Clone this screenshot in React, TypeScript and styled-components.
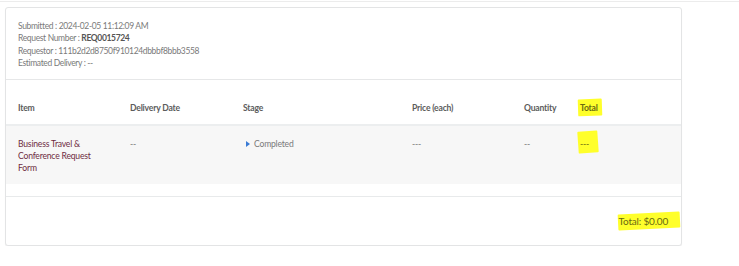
import React from "react";
import styled, { createGlobalStyle } from "styled-components";

const GlobalStyle = createGlobalStyle`
  html, body {
    margin: 0;
    padding: 0;
    background: #fff;
  }
  body {
    font-family: Lato, "Open Sans", sans-serif;
    color: #777;
  }
`;

const TopRule = styled.div`
  height: 1px;
  margin-top: 1px;
  background: #ececec;
`;

const Card = styled.div`
  width: 675px;
  margin: 5px 0 0 5px;
  border: 1px solid #e3e4e5;
  border-radius: 3px;
  box-shadow: 0 1px 1px rgba(0, 0, 0, 0.06);
  background: #fff;
`;

const Summary = styled.div`
  padding: 12px 12px 9px;
  border-bottom: 1px solid #e6e7e8;
  font-size: 8.5px;
  letter-spacing: -0.35px;
  line-height: 12.4px;
  color: #7a7a7a;
`;

const SummaryLine = styled.div`
  white-space: nowrap;
`;

const Strong = styled.b`
  color: #555;
  font-weight: 700;
`;

const columns = "112px 113px 169px 112px 56px 1fr";

const HeadRow = styled.div`
  display: grid;
  grid-template-columns: ${columns};
  padding: 22px 12px 10px;
  border-bottom: 2px solid #eceeef;
  font-size: 8.6px;
  letter-spacing: -0.2px;
  line-height: 12px;
  font-weight: 700;
  color: #5c5c5c;
`;

const BodyRow = styled.div`
  display: grid;
  grid-template-columns: ${columns};
  padding: 12px 12px 0;
  height: 46px;
  background: #f7f7f7;
  font-size: 8.6px;
  letter-spacing: -0.2px;
  line-height: 12px;
  color: #7a7a7a;
`;

const Cell = styled.div<{ $accent?: boolean }>`
  padding-right: 12px;
  color: ${(p) => (p.$accent ? "#6e2c3f" : "inherit")};
`;

const ItemName = styled.div`
  max-width: 80px;
  color: #6e2c3f;
`;

const StageCell = styled.div`
  display: flex;
  align-items: flex-start;
  gap: 4px;
`;

const Caret = styled.span`
  width: 0;
  height: 0;
  margin: 3px 0 0 3px;
  border-top: 3px solid transparent;
  border-bottom: 3px solid transparent;
  border-left: 4px solid #3a7bd5;
`;

const Gap = styled.div`
  height: 12px;
  border-bottom: 1px solid #e8eaeb;
`;

const Footer = styled.div`
  display: flex;
  justify-content: flex-end;
  align-items: center;
  height: 47px;
  padding: 1px 13px 0 0;
  font-size: 10px;
  letter-spacing: -0.2px;
  color: #777;
`;

const Highlight = styled.span<{ $tilt?: number; $pad?: string }>`
  position: relative;
  display: inline-block;
  color: #6a6a12;
  z-index: 0;

  &::before {
    content: "";
    position: absolute;
    inset: ${(p) => p.$pad || "-2px -3px"};
    background: #ffff2b;
    transform: rotate(${(p) => p.$tilt || 0}deg);
    z-index: -1;
    border-radius: 1px;
  }
`;

const App = () => {
  return (
    <>
      <GlobalStyle />
      <TopRule />
      <Card>
        <Summary>
          <SummaryLine>Submitted : 2024-02-05 11:12:09 AM</SummaryLine>
          <SummaryLine>
            Request Number : <Strong>REQ0015724</Strong>
          </SummaryLine>
          <SummaryLine>Requestor : 111b2d2d8750f910124dbbbf8bbb3558</SummaryLine>
          <SummaryLine>Estimated Delivery : --</SummaryLine>
        </Summary>

        <HeadRow>
          <div>Item</div>
          <div>Delivery Date</div>
          <div>Stage</div>
          <div>Price (each)</div>
          <div>Quantity</div>
          <div>
            <Highlight $tilt={-2} $pad="-3px -4px -2px -2px">Total</Highlight>
          </div>
        </HeadRow>

        <BodyRow>
          <ItemName>Business Travel &amp; Conference Request Form</ItemName>
          <Cell>--</Cell>
          <StageCell>
            <Caret />
            <span>Completed</span>
          </StageCell>
          <Cell>---</Cell>
          <Cell>--</Cell>
          <Cell>
            <Highlight $tilt={-4} $pad="-7px -9px -3px -2px">---</Highlight>
          </Cell>
        </BodyRow>
        <Gap />

        <Footer>
          <Highlight $tilt={-3} $pad="-2px -12px -2px -1px">Total: $0.00</Highlight>
        </Footer>
      </Card>
    </>
  );
};

export default App;
